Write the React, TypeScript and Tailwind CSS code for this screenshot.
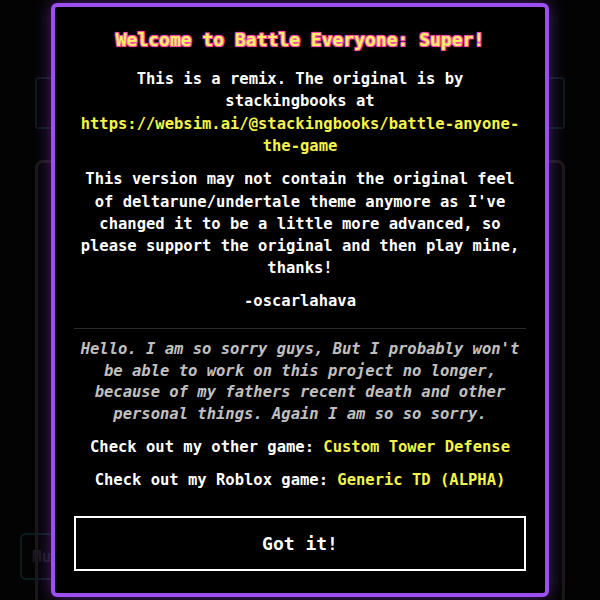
import React from "react";

const mono = "font-['DejaVu_Sans_Mono','Liberation_Mono',monospace]";

export default function App() {
  return (
    <div className={`relative w-[600px] h-[600px] overflow-hidden bg-[#050505] ${mono}`}>
      {/* dim game UI behind the dialog */}
      <div className="flex flex-col px-[35px] pt-[26px]">
        <div className="flex justify-between px-[20px] text-[28px] font-bold text-[#15120c] leading-[30px]">
          <span>Battle Everyone: Super!</span>
        </div>
        <div className="mt-[21px] h-[52px] rounded-[3px] border-2 border-[#16292e]" />
        <div className="mt-[31px] h-[500px] rounded-[8px] border-[3px] border-[#2a2724]" />
      </div>
      <div className="absolute left-[20px] top-[533px] flex h-[47px] w-[60px] items-center rounded-[6px] border-2 border-[#15302f] pl-[10px] text-[16px] font-bold text-[#2e2a36]">
        Mu
      </div>

      {/* overlay */}
      <div className="absolute inset-0 flex items-center justify-center bg-black/40">
        <div className="w-[498px] rounded-[6px] border-4 border-[#9b4ff0] bg-black px-[19px] pt-[18px] pb-[22px] text-center text-white shadow-[0_0_18px_rgba(150,70,240,0.45)]">
          <h1 className="text-[18px] font-bold leading-[30px] text-[#ffee66] [text-shadow:1px_1px_0_#ff4fa8,-1px_-1px_0_#ff4fa8,1px_-1px_0_#ff4fa8,-1px_1px_0_#ff4fa8,0_0_3px_#ff4fa8]">
            Welcome to Battle Everyone: Super!
          </h1>
          <p className="mt-[13px] text-[15.5px] font-bold leading-[22.3px]">
            This is a remix. The original is by stackingbooks at{" "}
            <span className="text-[#f4f44a]">https://websim.ai/@stackingbooks/battle-anyone-the-game</span>
          </p>
          <p className="mt-[11px] text-[15.5px] font-bold leading-[22.3px]">
            This version may not contain the original feel of deltarune/undertale theme anymore as I've changed it to be a little more advanced, so please support the original and then play mine, thanks!
          </p>
          <p className="mt-[10px] text-[15.5px] font-bold leading-[22.3px]">-oscarlahava</p>
          <div className="mt-[16px] border-t border-[#2a2a2a] pt-[10px]">
            <p className="text-[15.5px] italic font-bold leading-[21.7px] text-[#c0c0c0]">
              Hello. I am so sorry guys, But I probably won't be able to work on this project no longer, because of my fathers recent death and other personal things. Again I am so so sorry.
            </p>
          </div>
          <p className="mt-[10px] text-[15.5px] font-bold leading-[22px]">
            Check out my other game: <span className="text-[#f4f44a]">Custom Tower Defense</span>
          </p>
          <p className="mt-[11px] text-[15.5px] font-bold leading-[22px]">
            Check out my Roblox game: <span className="text-[#f4f44a]">Generic TD (ALPHA)</span>
          </p>
          <button className="mt-[25px] flex h-[55px] w-full items-center justify-center border-2 border-white bg-black text-[18px] font-bold text-white">
            Got it!
          </button>
        </div>
      </div>
    </div>
  );
}
